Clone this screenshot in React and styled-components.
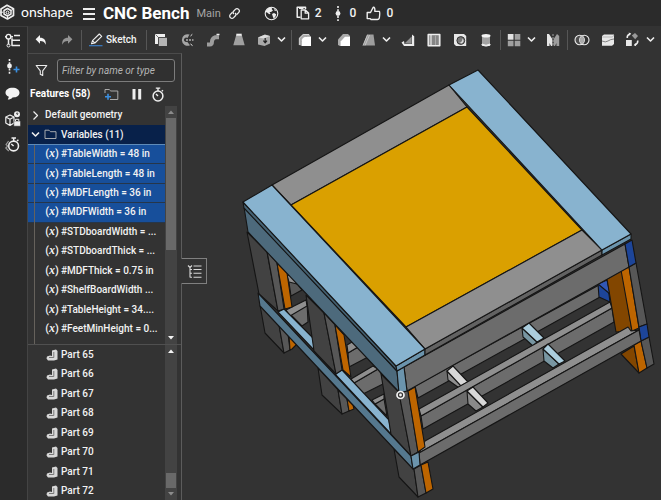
import React from 'react';
import styled, { createGlobalStyle } from 'styled-components';

const GlobalStyle = createGlobalStyle`
  * { box-sizing: border-box; }
  body { margin: 0; background: #333; color: #f2f2f2; font: 500 10px/16px Roboto, "Liberation Sans", sans-serif; }
  button { font: inherit; color: inherit; background: none; border: 0; padding: 0; cursor: pointer; }
  ul { list-style: none; margin: 0; padding: 0; }
  svg { display: block; flex: none; }
`;

const Page = styled.div`
  display: grid;
  grid-template: auto minmax(0, 1fr) / auto minmax(0, 1fr);
  height: 100vh;
  overflow: hidden;
`;
const Header = styled.header`
  grid-column: 1 / -1;
  display: flex;
  align-items: center;
  height: 26px;
  background: #2b2b2b;
  white-space: nowrap;
`;
const Brand = styled.a`
  display: flex;
  align-items: center;
  gap: 6px;
  width: 82px;
  color: #fff;
  text-decoration: none;
  font: 400 14px/22px Lato, sans-serif;
  padding-bottom: 2px;
`;
const Title = styled.h1`
  margin: 0 7px;
  font-size: 17px;
  line-height: 24px;
  font-weight: 700;
  color: #fff;
`;
const Branch = styled.span`
  color: #a5a5a5;
  font-size: 11px;
  font-weight: 400;
  margin-right: 7px;
  padding-top: 2px;
`;
const HeadButton = styled.button`
  display: flex;
  align-items: center;
  gap: 5px;
  margin-right: ${(p) => p.$after || 0}px;
  font-size: 12px;
`;

const SideBar = styled.nav`
  width: 28px;
  border-right: 1px solid #444;
  border-top: 1px solid #3c3c3c;
  background: #2b2b2b;
  display: flex;
  flex-direction: column;
  padding-top: 1px;
`;
const SideButton = styled.button`
  height: 26px;
  width: 25px;
  display: grid;
  place-items: center;
`;
const Main = styled.main`
  display: flex;
  flex-direction: column;
  min-width: 0;
`;
const ToolBar = styled.div`
  display: flex;
  align-items: center;
  flex: none;
  height: 27px;
  overflow: hidden;
`;
const Tool = styled.button`
  width: ${(p) => (p.$menu ? 24 : 26)}px;
  height: 26px;
  flex: none;
  display: grid;
  place-items: center;
`;
const MenuArrow = styled.button`
  width: 12px;
  height: 26px;
  margin-right: 2px;
  flex: none;
  display: grid;
  place-items: center;
`;
const Divider = styled.span`
  width: 1px;
  height: 20px;
  margin: 0 1px;
  flex: none;
  background: #565656;
`;
const SketchButton = styled.button`
  display: flex;
  align-items: center;
  gap: 3px;
  flex: none;
  padding: 0 8px 0 6px;
`;

const Workspace = styled.div`
  display: flex;
  flex: 1;
  min-height: 0;
`;
const Panel = styled.aside`
  width: 154px;
  flex: none;
  border-top: 1px solid #4b4b4b;
  border-right: 1px solid #5c5c5c;
  display: flex;
  flex-direction: column;
`;
const FilterRow = styled.label`
  display: flex;
  align-items: center;
  padding: 5px 6px 0 7px;
  gap: 9px;
`;
const FilterInput = styled.input`
  flex: 1;
  min-width: 0;
  height: 23px;
  padding: 0 4px;
  border: 1px solid #7c7c7c;
  border-radius: 3px;
  background: #303030;
  color: #ddd;
  font: italic 400 10px/16px Roboto, sans-serif;
  &::placeholder { color: #b5b5b5; opacity: 1; }
`;
const FeatureHead = styled.div`
  display: flex;
  align-items: center;
  height: 24px;
  padding: 0 16px 0 2px;
  h2 { flex: 1; margin: 0; font-size: 10px; line-height: 16px; font-weight: 700; color: #fff; white-space: nowrap; }
`;
const HeadIcon = styled.button`
  width: 23px;
  display: flex;
  justify-content: flex-end;
`;
const ListPane = styled.div`
  display: flex;
  flex: ${(p) => p.$grow} 1 0;
  min-height: 0;
  overflow: hidden;
  border-top: ${(p) => (p.$ruled ? '1px solid #505050' : '0')};
  padding-right: 4px;
`;
const Rows = styled.ul`
  display: grid;
  grid-template-rows: repeat(${(p) => p.$count}, minmax(0, 1fr));
  height: ${(p) => p.$height};
  flex: 1;
  min-width: 0;
  position: relative;
`;
const Row = styled.li`
  display: flex;
  align-items: center;
  gap: ${(p) => (p.$gap || 2)}px;
  min-width: 0;
  padding-left: ${(p) => p.$indent}px;
  white-space: nowrap;
  background: ${(p) => (p.$selected ? '#174f9b' : p.$open ? '#08214a' : 'transparent')};
  border-bottom: 1px solid ${(p) => (p.$open ? '#5f8bb8' : p.$selected ? '#26364a' : 'transparent')};
`;
const GuideLine = styled.i`
  position: absolute;
  left: 6px;
  top: 39px;
  bottom: 0;
  width: 1px;
  background: #66625c;
`;
const XMark = styled.span`
  width: 14px;
  text-align: center;
  font-size: 11px;
  i { font: italic 700 12px/14px "Liberation Serif", serif; }
`;
const Track = styled.div`
  width: 12px;
  flex: none;
  background: #434343;
  display: flex;
  flex-direction: column;
  align-items: stretch;
`;
const Thumb = styled.div`
  margin: 0 1px;
  background: #696969;
  flex: ${(p) => p.$size} 1 0;
`;
const Space = styled.div`flex: ${(p) => p.$size} 1 0;`;
const Arrow = styled.button`
  height: 12px;
  display: grid;
  place-items: center;
  color: ${(p) => (p.$dim ? '#8c8c8c' : '#f4f4f4')};
`;

const Viewport = styled.section`
  position: relative;
  flex: 1;
  min-width: 0;
  > svg { width: 100%; height: 100%; }
`;
const PanelTab = styled.button`
  position: absolute;
  left: -1px;
  top: 205px;
  width: 26px;
  height: 26px;
  border: 1px solid #808080;
  border-left-color: #333;
  background: #333;
  display: grid;
  place-items: center;
`;

const Icon = ({ w = 16, h = w, children }) => (
  <svg width={w} height={h} viewBox={`0 0 ${w} ${h}`} fill="none" stroke="#eee" strokeLinejoin="round" aria-hidden="true">{children}</svg>
);
const Chevron = ({ right }) => (
  <Icon w={9}><path d={right ? 'M2.5 .5 6.5 4.5 2.5 8.5' : 'M1 2.5 4.5 6 8 2.5'} strokeWidth={right ? 1.2 : 1.6} /></Icon>
);

const icons = {
  logo: (
    <Icon w={15} h={16}>
      <path d="M1 5 7 1.3 13.5 4.8V11.5L7.5 15 1 11.5Z" strokeWidth="1.7" />
      <path d="M4 6.5 7.5 4.5 11 6.5V10L7.5 12 4 10Z" strokeWidth="1.5" />
      <path d="M6 8 7.5 7 9 8V9L7.5 10 6 9Z M0 8.2H3 M11 6.5 14 4.8 M7.5 12V15" strokeWidth="1" />
    </Icon>
  ),
  menu: <Icon w={14}><path d="M1 3H13M1 8H13M1 13H13" strokeWidth="2" /></Icon>,
  link: (
    <Icon w={13}>
      <g transform="rotate(-45 6.5 6.5)" strokeWidth="1.3"><path d="M6 4.2H3A2.3 2.3 0 0 0 3 8.8H5.5Q7.3 8.6 7.4 6.5" /><path d="M7 8.8H10A2.3 2.3 0 0 0 10 4.2H7.5Q5.7 4.4 5.6 6.5" /></g>
    </Icon>
  ),
  globe: (
    <Icon w={15}>
      <circle cx="7.5" cy="7.5" r="6.3" strokeWidth="1.1" />
      <path d="M2 4.5 4.5 2 8 1.5 7.8 3.2 9 4.5 7 6 5.5 6 6.5 7.7 5.2 8.2 3.5 6.8 1.6 6ZM8 8 10 7 12.2 8.2 11.5 10.5 9.7 12.7 8.8 10.5ZM10.2 2.4 12.4 4.5 10.7 5Z" fill="#eee" stroke="none" />
    </Icon>
  ),
  copies: <Icon w={14}><path d="M4.5 11.3H1.2V1.3H9.5V3" strokeWidth="1.5" /><path d="M3 2H7.5" strokeWidth="2" /><path d="M5.2 4H9.3L12.6 7V12.8H5.2ZM9.2 4V7.2H12.6" strokeWidth="1.3" /></Icon>,
  version: <Icon w={8} h={15}><path d="M4 0V15" strokeWidth="1.6" strokeDasharray="2 1.3" /><circle cx="4" cy="7.5" r="2.4" fill="#eee" stroke="none" /></Icon>,
  like: <Icon w={15}><path d="M1.2 6.5H4.5L7.2 1.2Q9.3 1 8.8 5.4H13.3Q14.2 6 13.3 12Q12.8 13.5 11.5 13.5H5L4 12.6H1.2Z" strokeWidth="1.4" /></Icon>,
  tree: <Icon w={16}><circle cx="3.5" cy="3.7" r="2.3" strokeWidth="1.4" /><path d="M0 3.7H1.2M5.8 3.7H8M3.5 6V11.5M9 2.5H15M9 7.3H15M9 12.5H15M7 5.2V12.5H9M7 7.3H9" strokeWidth="1.5" /><circle cx="3.5" cy="12.5" r="1.5" strokeWidth="1" /></Icon>,
  addVersion: <Icon w={16}><path d="M4.5 0V15" strokeWidth="1.6" strokeDasharray="2 1.2" /><circle cx="4.5" cy="7" r="2.4" fill="#eee" stroke="none" /><path d="M8.5 10.5H14.5M11.5 7.5V13.5" stroke="#3b8fe0" strokeWidth="1.6" /></Icon>,
  comment: <Icon w={15}><path d="M7.5 1.8C11.5 1.8 14.5 3.8 14.5 6.8 14.5 9.8 11.5 11.6 7.5 11.5 6.5 13 4.5 13.5 2.8 13.5L3.9 10.8C1.6 10 .5 8.5 .5 6.8 .5 3.8 3.5 1.8 7.5 1.8Z" fill="#f3f3f3" stroke="none" /></Icon>,
  boxHelp: <Icon w={16}><path d="M.8 6 5 4 9 6V12L5 14.5.8 12ZM.8 6 5 8.2 9 6M5 8.2V14.5" strokeWidth="1.2" /><circle cx="12" cy="3.3" r="3" fill="#eee" stroke="none" /><path d="M11 2.8Q12 1 13 2.5L12 4" stroke="#222" strokeWidth=".8" /><path d="M8.8 10H15.5V15.2H8.8Z" fill="#eee" stroke="#2b2b2b" strokeWidth=".5" /><path d="M10.5 10V8.3H13.8V10" /></Icon>,
  timerLeft: <Icon w={16}><circle cx="8.6" cy="9" r="4.9" strokeWidth="1.6" /><path d="M6.5 1H11M8.7 1V4M8.6 9 6.3 7M12 4 13.4 2.7" strokeWidth="1.5" /><path d="M3.6 4.2 1 7.5 2.8 9 .8 11 3.8 14" stroke="#999" strokeWidth="1.2" /></Icon>,
  undo: <Icon w={12}><path d="M5 1V3.7C9 3.7 11.2 5.9 10.7 10.7 9.6 8 8 7 5 7V9.7L.6 5.3Z" fill="#f4f4f4" stroke="none" /></Icon>,
  redo: <Icon w={12}><path d="M7 1V3.7C3 3.7.8 5.9 1.3 10.7 2.4 8 4 7 7 7V9.7L11.4 5.3Z" fill="#959595" stroke="none" /></Icon>,
  pencil: <Icon w={14}><path d="M2.5 10.8 3.5 7.7 10.3 1 12.7 3.3 5.9 10Z M3.6 7.8 5.7 9.9" strokeWidth="1.1" /><path d="M0 12.7H13.5" stroke="#3b82d0" strokeWidth="1.1" /></Icon>,
  extrude: <Icon w={14}><path d="M1 1H11V4H4V11H1Z" fill="#eee" stroke="none" /><path d="M4.8 4.8H13V13H4.8Z" fill="#b4b4b4" stroke="none" /><path d="M1.5 1.5 4.5 4.5" stroke="#777" /></Icon>,
  revolve: <Icon w={14}><path d="M9.5 1.5A5.8 5.8 0 1 0 10 12.3L7.2 8.7A2.2 2.2 0 1 1 7.5 5Z" fill="#a5a5a5" stroke="none" /><path d="M6 7H13.5" strokeDasharray="2 1" /><path d="M10.5 3 12.3 1.3M10.5 11 12.5 12.6" /></Icon>,
  sweep: <Icon w={14}><path d="M1 11.5H3.8Q6 11.5 6 8.5T9.5 4.2H13" stroke="#9d9d9d" strokeWidth="4" /><path d="M10.5 1.5H13.5" strokeWidth="1.5" /></Icon>,
  loft: <Icon w={14}><path d="M4.2 2H9.8L12.7 12.2H1.3Z" fill="#a0a0a0" stroke="none" /><path d="M4.3 1.7H9.7" strokeWidth="2" /></Icon>,
  thicken: <Icon w={14}><path d="M1 4.5 8 1.5 13 3V10.5L7.5 13 1 11.5Z" fill="#aaa" stroke="none" /><path d="M1 4.5 7.7 1.8 12.8 3 6.8 5.5Z" fill="#ddd" stroke="none" /><path d="M8.2 5V9.5M6.4 7.7 8.2 9.8 10 7.7" stroke="#222" strokeWidth="1.2" /></Icon>,
  fillet: <Icon w={14}><path d="M1 12V5L5 1H11L12.5 3.5H8L3.5 8V12.5Z" fill="#aaa" stroke="none" /><path d="M3.5 13V9Q3.5 3.8 9 3.5H13V13Z" fill="#fff" stroke="none" /><path d="M1.3 12V5.3L5.3 1.5H11" stroke="#ddd" strokeWidth=".8" /></Icon>,
  chamfer: <Icon w={14}><path d="M1 12V6.5L6 1H11L13 3V13H3Z" fill="#aaa" stroke="none" /><path d="M3.6 13V8.5L8 3.8H13V13Z" fill="#fff" stroke="none" /></Icon>,
  draft: <Icon w={14}><path d="M.8 12.5 5.2 1.5H11.5L13 12.5Z" fill="#9d9d9d" stroke="none" /><path d="M1 12.5 5.5 1.8M3 12.5 7.5 2" stroke="#d0d0d0" strokeWidth=".8" /></Icon>,
  rib: <Icon w={14}><path d="M.5 9.5 3 8 3.5 11H11V1.5L13.2 3.2V13H3Z" fill="#ececec" stroke="none" /><path d="M3.5 10.5 10.7 3.5V10.8Z" fill="#8f8f8f" stroke="none" /></Icon>,
  shell: <Icon w={14}><path d="M1.2 1.5H12.8V12.8H1.2Z" fill="#999" strokeWidth="1.5" /><path d="M4 1.5V12" /><path d="M5 2.5H11V12H5Z" fill="#858585" stroke="none" /><path d="M8.5 2.5V12" stroke="#aaa" /></Icon>,
  hole: <Icon w={14}><path d="M1 1H11L13.2 3V13H3L1 11Z" fill="#e8e8e8" stroke="none" /><circle cx="7.8" cy="7.5" r="3.9" fill="#777" stroke="#333" /><path d="M6 9.8Q9.5 9.5 9.5 5.5Q12 8 9 10.5Z" fill="#ddd" stroke="none" /></Icon>,
  thread: <Icon w={12} h={14}><path d="M2 3H10V11.5Q6 14 2 11.5Z" fill="#a3a3a3" stroke="none" /><ellipse cx="6" cy="2.8" rx="4.5" ry="1.8" fill="#f4f4f4" stroke="none" /><path d="M2 11Q6 13.5 10 11V12.2Q6 14 2 12.2Z" fill="#eee" /></Icon>,
  pattern: <Icon w={14}><g stroke="none"><path d="M.8 1H6.5V6.7H.8Z" fill="#e2e2e2" /><path d="M7.7 1H13.3V6.7H7.7ZM.8 7.8H6.5V13.3H.8ZM7.7 7.8H13.3V13.3H7.7Z" fill="#a0a0a0" /></g></Icon>,
  mirror: <Icon w={14}><path d="M1 1H3L6.3 6V13H5L3.5 10V13H1Z" fill="#e5e5e5" stroke="none" /><path d="M7.7 6 11 1 13.2 3V13H10.5V10L9 13H7.7Z" fill="#9d9d9d" stroke="none" /><path d="M7 1V13" stroke="#bbb" strokeDasharray="2 1" strokeWidth=".8" /></Icon>,
  bool: <Icon w={16}><circle cx="5.7" cy="8" r="4.7" fill="#777" fillOpacity=".4" strokeWidth="1.1" /><circle cx="10.3" cy="8" r="4.7" strokeWidth="1.1" /><path d="M8 4A4.7 4.7 0 0 1 8 12A4.7 4.7 0 0 1 8 4Z" fill="#aaa" stroke="none" /></Icon>,
  split: <Icon w={14}><path d="M1 3 3 1.5H13V11L11 12.8H1Z" fill="#e8e8e8" stroke="none" /><path d="M1 8Q4.5 9.8 7 8T13 6" stroke="#777" strokeWidth=".9" /><path d="M1.2 4H11.5L13 2" stroke="#aaa" strokeWidth=".8" /></Icon>,
  transform: <Icon w={15}><path d="M1 8H6.8V14H1Z" fill="#e8e8e8" stroke="none" /><path d="M6.8 3.5 10 1 13 4 10.2 7.2Z" fill="#999" stroke="none" /><path d="M2.2 6Q2 3 4.8 2M12.8 8.5Q13 11.5 10 12.8" strokeWidth="1.5" /><path d="M3.7.5 6.2 1.5 4.5 3.7ZM11.2 14.2 8.7 13.2 10.5 11Z" fill="#eee" stroke="none" /></Icon>,
  filter: <Icon w={13}><path d="M1.2 1.5H11.8L7.7 6.8V11.5L5.3 10.2V6.8Z" strokeWidth="1.1" /></Icon>,
  addFolder: <Icon w={15} h={13}><path d="M1 5V1.5H5.2L6.8 3H13.8V11.5H6" stroke="#aaa" /><path d="M1 8.7H7M4 5.8V11.7" stroke="#3b8fe0" strokeWidth="1.6" /></Icon>,
  pause: <Icon w={10} h={12}><path d="M2 1V11.5M7.7 1V11.5" strokeWidth="3" /></Icon>,
  timer: <Icon w={14} h={15}><circle cx="7" cy="9" r="4.9" strokeWidth="1.5" /><path d="M4.8 1.1H9.2M7 1V4M10.8 4.3 12 3.2M7 9 5 7" strokeWidth="1.4" /></Icon>,
  folder: <Icon w={13} h={11}><path d="M1 9.5V1.2H5L6.5 2.7H12V9.5Z" stroke="#b9b9b9" strokeWidth=".9" /></Icon>,
  part: <Icon w={12}><path d="M6 1.5 10 .5 11.5 2V10.5L8 11.5H2L.5 9.5 1 7.5 4 6.5 6 7Z" fill="#d8d8d8" stroke="none" /><path d="M7.8 3V8.5H3" stroke="#6d6d6d" strokeWidth=".9" /></Icon>,
  panelTree: <Icon w={15}><path d="M1 1.5 3 3.5 5 1.5M3 3V13.5M6.5 2H14.5M3 5.5H5M6.5 5.5H14.5M3 9.3H5M6.5 9.3H14.5M3 13.2H5M6.5 13.2H14.5" stroke="#d8d8d8" strokeWidth="1.1" /></Icon>,
};

const toolGroups = [
  [['extrude'], ['revolve'], ['sweep'], ['loft'], ['thicken', true]],
  [['fillet', true], ['chamfer'], ['draft', true], ['rib'], ['shell'], ['hole'], ['thread']],
  [['pattern', true], ['mirror']],
  [['bool'], ['split'], ['transform', true]],
];
const variables = ['#TableWidth = 48 in', '#TableLength = 48 in', '#MDFLength = 36 in', '#MDFWidth = 36 in', '#STDboardWidth = ...', '#STDboardThick = ...', '#MDFThick = 0.75 in', '#ShelfBoardWidth ...', '#TableHeight = 34....', '#FeetMinHeight = 0...'];
const parts = [65, 66, 67, 68, 69, 70, 71, 72];

const C = { top: '#88b3cf', side: '#4d6a7c', end: '#6b94ad', lit: '#8f8f8f', mid: '#6c6c6c', dark: '#424242', leg: '#575757', oak: '#bd6500', oakDark: '#824600', gold: '#daa000', navy: '#1d4599', bg: '#333' };

/* Faces of the bench, painted from the farthest to the nearest. */
const faces = [
  ['mid', '415,386 599,285 600,297 418,398'],
  ['navy', '598,284 607,280 610,302 599,297'],
  ['#3157b5', '598,284 607,280 610,294'],
  ['#909090', '447,371 461,385 462,390 448,380'],
  ['#d8d8d8', '447,371 453,366 468,382 461,386'],
  ['#7896a2', '522,328 537,342 533,346 523,337'],
  ['#abcddd', '522,328 529,323 544,338 537,342'],
  ['mid', '421,416 612,308 614,322 423,429'],
  ['lit', '419,409 610,302 612,308 421,416'],
  ['#898989', '467,391 483,407 476,411 468,404'],
  ['#d8d8d8', '467,391 473,387 488,403 483,407'],
  ['#7896a2', '543,349 559,364 553,368 544,361'],
  ['#abcddd', '543,349 548,344 565,361 559,364'],
  ['oakDark', '607,279 622,270 632,331 616,332'],
  ['oakDark', '621,354 634,346 639,373'],
  ['oak', '634,345 641,341 647,368 639,373'],
  ['leg', '641,341 649,337 654,364 647,368'],
  ['oak', '621,270 629,267 639,328 632,331'],
  ['leg', '629,267 636,263 647,324 639,327'],
  ['navy', '639,327 647,324 649,337 641,341'],
  ['lit', '425,441 628,327 631,331 639,330 419,453'],
  ['mid', '419,453 639,330 641,341 420,465'],
  ['leg', '288,276 297,284 302,290 291,296'],
  ['lit', '287,276 293,273 297,284 289,282'],
  ['mid', '287,311 307,303 308,322 302,326'],
  ['lit', '286,310 306,300 307,306 290,316'],
  ['mid', '348,353 358,347 368,357 349,367'],
  ['lit', '347,345 352,342 358,347 348,353'],
  ['mid', '354,383 378,369 382,375 383,384 363,394'],
  ['lit', '351,379 373,366 378,369 354,383'],
  ['mid', '375,404 384,399 387,416'],
  ['lit', '372,400 384,394 384,399 375,404'],
  ['dark', '260,305 279,325 284,353 265,333'],
  ['leg', '279,325 288,334 290,350 284,353'],
  ['oak', '289,335 297,344 292,349 290,350'],
  ['dark', '318,368 338,390 342,414 322,395'],
  ['leg', '338,390 347,399 349,411 342,414'],
  ['oak', '347,399 353,405 354,409 349,411'],
  ['dark', '394,449 414,469 418,497 399,477'],
  ['leg', '414,469 421,465 426,493 418,497'],
  ['oak', '421,465 428,462 433,489 426,493'],
  ['top', '278,312 284,309 314,339 314,350'],
  ['top', '335,374 342,370 389,420 391,434'],
  ['dark', '247,232 267,252 278,311 259,294'],
  ['leg', '267,251 277,263 284,309 278,311'],
  ['oak', '277,263 287,273 292,307 285,309'],
  ['dark', '306,295 324,313 336,374 314,351'],
  ['leg', '324,313 335,325 342,370 336,374'],
  ['oak', '335,325 344,335 351,377 343,370'],
  ['dark', '381,374 399,392 411,456 391,434'],
  ['leg', '399,393 408,390 418,452 411,456'],
  ['oak', '408,391 415,387 425,447 418,452'],
  ['#55788e', '258,293 411,456 413,469 260,306'],
  ['end', '411,456 419,452 420,465 413,469'],
  ['side', '244,207 397,371 399,392 248,232'],
  ['mid', '404,367 625,244 629,267 407,391'],
  ['end', '397,371 404,367 407,391 399,393'],
  ['navy', '625,244 632,240 636,263 629,267'],
  ['#456273', '243,202 396,366 397,371 244,208'],
  ['end', '396,366 425,349 425,355 397,371'],
  ['#626262', '425,349 602,250 602,255 425,355'],
  ['end', '602,250 631,234 631,239 602,255'],
  ['lit', '272,185 449,85 467,107 291,205'],
  ['gold', '291,205 467,107 582,230 406,327'],
  ['lit', '406,327 582,230 602,250 425,349'],
  ['top', '243,202 272,185 425,349 396,366'],
  ['top', '449,85 478,70 631,234 602,250'],
];

const Bench = () => (
  <svg viewBox="182 53 479 447" preserveAspectRatio="xMinYMin meet" role="img" aria-label="CNC bench model">
    <g stroke="#151515" strokeWidth="1.1" strokeLinejoin="round">
      {faces.map(([tone, points]) => <polygon key={tone + points} points={points} fill={C[tone] || tone} />)}
    </g>
    <circle cx="400.5" cy="395" r="3.5" fill="#333" stroke="#f2f2f2" strokeWidth="1.7" />
    <circle cx="400.5" cy="395" r="1.4" fill="#f2f2f2" />
  </svg>
);

const Triangle = ({ up }) => (
  <svg width="6" height="4" viewBox="0 0 6 4" aria-hidden="true"><path d={up ? 'M0 4 3 .5 6 4Z' : 'M0 0 3 3.5 6 0Z'} fill="currentColor" /></svg>
);
const ScrollBar = ({ before, thumb, after, dimUp, dimDown }) => (
  <Track>
    <Arrow $dim={dimUp} aria-label="Scroll up"><Triangle up /></Arrow>
    <Space $size={before} /><Thumb $size={thumb} /><Space $size={after} />
    <Arrow $dim={dimDown} aria-label="Scroll down"><Triangle /></Arrow>
  </Track>
);

export default function App() {
  return (
    <Page>
      <GlobalStyle />
      <Header>
        <Brand href="#">{icons.logo}onshape</Brand>
        <HeadButton aria-label="Menu">{icons.menu}</HeadButton>
        <Title>CNC Bench</Title>
        <Branch>Main</Branch>
        <HeadButton $after={23} aria-label="Share link">{icons.link}</HeadButton>
        <HeadButton $after={17} aria-label="Public">{icons.globe}</HeadButton>
        <HeadButton $after={12} aria-label="Copies">{icons.copies}2</HeadButton>
        <HeadButton $after={10} aria-label="Versions">{icons.version}<span>&nbsp;0</span></HeadButton>
        <HeadButton aria-label="Likes">{icons.like}0</HeadButton>
      </Header>
      <SideBar>
        {['tree', 'addVersion', 'comment', 'boxHelp', 'timerLeft'].map((n) => <SideButton key={n} aria-label={n}>{icons[n]}</SideButton>)}
      </SideBar>
      <Main>
        <ToolBar>
          <Tool aria-label="Undo">{icons.undo}</Tool>
          <Tool aria-label="Redo">{icons.redo}</Tool>
          <Divider />
          <SketchButton>{icons.pencil}Sketch</SketchButton>
          {toolGroups.map((group) => (
            <React.Fragment key={group[0][0]}>
              <Divider />
              {group.map(([name, menu]) => (
                <React.Fragment key={name}>
                  <Tool $menu={menu} aria-label={name}>{icons[name]}</Tool>
                  {menu && <MenuArrow aria-label={`${name} options`}><Chevron /></MenuArrow>}
                </React.Fragment>
              ))}
            </React.Fragment>
          ))}
        </ToolBar>
        <Workspace>
          <Panel>
            <FilterRow>{icons.filter}<FilterInput aria-label="Filter" placeholder="Filter by name or type" /></FilterRow>
            <FeatureHead>
              <h2>Features (58)</h2>
              <HeadIcon aria-label="Add folder">{icons.addFolder}</HeadIcon>
              <HeadIcon aria-label="Pause">{icons.pause}</HeadIcon>
              <HeadIcon aria-label="Timer">{icons.timer}</HeadIcon>
            </FeatureHead>
            <ListPane $grow={239}>
              <Rows $count={13} $height="106%">
                <Row $indent={3} $gap={5}><Chevron right />Default geometry</Row>
                <Row $indent={3} $gap={4} $open><Chevron />{icons.folder}Variables (11)</Row>
                {variables.map((v, i) => (
                  <Row key={v} $indent={17} $selected={i < 4}><XMark>(<i>x</i>)</XMark>{v}</Row>
                ))}
                <GuideLine />
              </Rows>
              <ScrollBar before={0} thumb={133} after={83} dimUp />
            </ListPane>
            <ListPane $grow={155} $ruled>
              <Rows $count={8} $height="101%">
                {parts.map((n) => <Row key={n} $indent={18} $gap={3}>{icons.part}Part {n}</Row>)}
              </Rows>
              <ScrollBar before={116} thumb={15} after={0} dimDown />
            </ListPane>
          </Panel>
          <Viewport>
            <Bench />
            <PanelTab aria-label="Toggle tree">{icons.panelTree}</PanelTab>
          </Viewport>
        </Workspace>
      </Main>
    </Page>
  );
}
